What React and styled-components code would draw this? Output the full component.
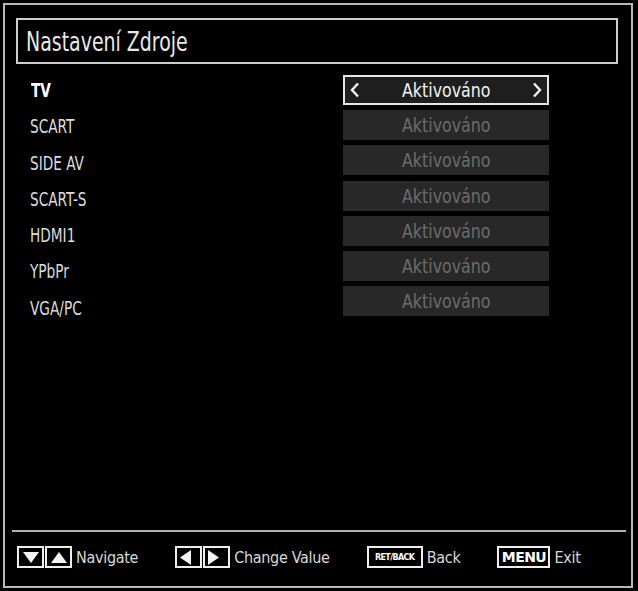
import React from "react";
import styled, { createGlobalStyle } from "styled-components";

const GlobalStyle = createGlobalStyle`
  html, body {
    margin: 0;
    padding: 0;
    background: #000;
  }
  body {
    font-family: "DejaVu Sans Condensed", "DejaVu Sans", sans-serif;
    font-stretch: condensed;
  }
`;

const Screen = styled.div`
  width: 638px;
  height: 591px;
  background: #000;
  padding: 3px;
  box-sizing: border-box;
`;

const Frame = styled.div`
  height: 585px;
  width: 630px;
  box-sizing: border-box;
  border: 2px solid #b8b8b8;
  display: flex;
  flex-direction: column;
`;

// the TV font is much narrower than anything installed, so glyphs get squeezed
const Squeeze = styled.span`
  display: inline-block;
  white-space: nowrap;
  transform: scaleX(${(p) => p.$k});
  transform-origin: ${(p) => p.$origin || "left"} center;
`;

const TitleBar = styled.div`
  margin: 13px 13px 0 11px;
  height: 46px;
  box-sizing: border-box;
  border: 2px solid #cdcdcd;
  display: flex;
  align-items: center;
  padding: 1px 0 0 8px;
  color: #e8e8e8;
  font-size: 27px;
`;

const Body = styled.div`
  flex: 1;
  display: flex;
  padding: 11px 0 0 25px;
`;

const Labels = styled.div`
  width: 313px;
  display: flex;
  flex-direction: column;
  gap: 6.3px;
`;

const Label = styled.div`
  height: 30px;
  display: flex;
  align-items: center;
  font-size: 20px;
  color: ${(p) => (p.$active ? "#ffffff" : "#dcdcdc")};
  font-weight: ${(p) => (p.$active ? "bold" : "normal")};
  padding-left: ${(p) => (p.$active ? "1px" : "0")};
`;

const Values = styled.div`
  display: flex;
  flex-direction: column;
  gap: 5.2px;
`;

const ValueBox = styled.div`
  width: 206px;
  height: 30px;
  box-sizing: border-box;
  display: flex;
  align-items: center;
  justify-content: space-between;
  padding: 0 4px;
  font-size: 20px;
  background: ${(p) => (p.$active ? "#1e1e1e" : "#282828")};
  border: 2px solid ${(p) => (p.$active ? "#e6e6e6" : "#282828")};
  color: ${(p) => (p.$active ? "#f2f2f2" : "#6c6c6c")};
`;

const ValueText = styled.span`
  flex: 1;
  text-align: center;
`;

const Chevron = styled.svg`
  width: 12px;
  height: 16px;
  flex: none;
  visibility: ${(p) => (p.$hidden ? "hidden" : "visible")};
`;

const Divider = styled.div`
  height: 2px;
  margin: 0 5px 0 7px;
  background: #b0b0b0;
`;

const Footer = styled.div`
  height: 54px;
  box-sizing: border-box;
  padding: 0 0 4px 12px;
  display: flex;
  align-items: center;
  gap: 37px;
`;

const Hint = styled.div`
  display: flex;
  align-items: center;
  gap: 4px;
  font-size: 16px;
  letter-spacing: -0.3px;
  color: #d8d8d8;
`;

const KeyPair = styled.div`
  display: flex;
  gap: 1px;
`;

const KeyCell = styled.div`
  width: 27px;
  height: 22px;
  box-sizing: border-box;
  border: 2px solid #eeeeee;
  display: flex;
  align-items: center;
  justify-content: ${(p) => p.$justify || "center"};
  padding: 0 3px;
`;

const KeyLabel = styled.div`
  height: 22px;
  width: ${(p) => p.$w}px;
  box-sizing: border-box;
  border: 2px solid #eeeeee;
  display: flex;
  align-items: center;
  justify-content: center;
  color: #fff;
  font-family: "DejaVu Sans", "Liberation Sans", sans-serif;
  font-stretch: normal;
  font-weight: bold;
  font-size: ${(p) => p.$size}px;
  letter-spacing: ${(p) => p.$spacing || 0}px;
`;

const Tri = ({ dir }) => {
  const pts = {
    down: "0,0 16,0 8,11",
    up: "0,11 16,11 8,0",
    left: "11,0 11,15 0,7.5",
    right: "0,0 0,15 11,7.5",
  }[dir];
  const vertical = dir === "up" || dir === "down";
  return (
    <svg
      width={vertical ? 16 : 11}
      height={vertical ? 11 : 15}
      viewBox={vertical ? "0 0 16 11" : "0 0 11 15"}
    >
      <polygon points={pts} fill="#f4f4f4" />
    </svg>
  );
};

const sources = ["TV", "SCART", "SIDE AV", "SCART-S", "HDMI1", "YPbPr", "VGA/PC"];

export default function App() {
  return (
    <>
      <GlobalStyle />
      <Screen>
        <Frame>
          <TitleBar>
            <Squeeze $k={0.78}>Nastavení Zdroje</Squeeze>
          </TitleBar>
          <Body>
            <Labels>
              {sources.map((s, i) => (
                <Label key={s} $active={i === 0}>
                  <Squeeze $k={0.76}>{s}</Squeeze>
                </Label>
              ))}
            </Labels>
            <Values>
              {sources.map((s, i) => (
                <ValueBox key={s} $active={i === 0}>
                  <Chevron viewBox="0 0 12 16" $hidden={i !== 0}>
                    <polyline
                      points="9,1.5 3,8 9,14.5"
                      fill="none"
                      stroke="#f2f2f2"
                      strokeWidth="2.4"
                    />
                  </Chevron>
                  <ValueText>
                    <Squeeze $k={0.88} $origin="center">
                      Aktivováno
                    </Squeeze>
                  </ValueText>
                  <Chevron viewBox="0 0 12 16" $hidden={i !== 0}>
                    <polyline
                      points="3,1.5 9,8 3,14.5"
                      fill="none"
                      stroke="#f2f2f2"
                      strokeWidth="2.4"
                    />
                  </Chevron>
                </ValueBox>
              ))}
            </Values>
          </Body>
          <Divider />
          <Footer>
            <Hint>
              <KeyPair>
                <KeyCell>
                  <Tri dir="down" />
                </KeyCell>
                <KeyCell>
                  <Tri dir="up" />
                </KeyCell>
              </KeyPair>
              Navigate
            </Hint>
            <Hint>
              <KeyPair>
                <KeyCell $justify="flex-start">
                  <Tri dir="left" />
                </KeyCell>
                <KeyCell $justify="flex-start">
                  <Tri dir="right" />
                </KeyCell>
              </KeyPair>
              Change Value
            </Hint>
            <Hint>
              <KeyLabel $w={56} $size={8} $spacing={-0.6}>
                RET/BACK
              </KeyLabel>
              Back
            </Hint>
            <Hint>
              <KeyLabel $w={53} $size={14} $spacing={-0.6}>
                MENU
              </KeyLabel>
              Exit
            </Hint>
          </Footer>
        </Frame>
      </Screen>
    </>
  );
}
